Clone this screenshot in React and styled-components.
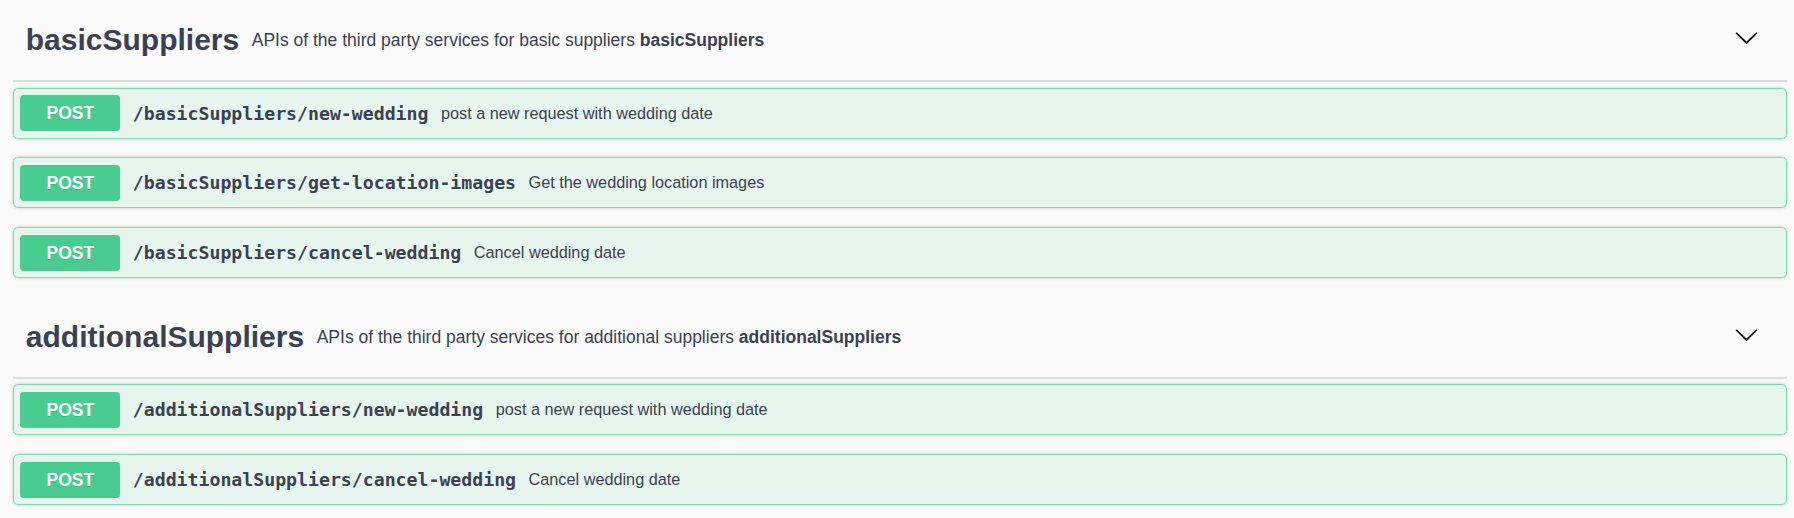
import React from "react";
import styled, { createGlobalStyle } from "styled-components";

const Global = createGlobalStyle`
  html, body { margin: 0; padding: 0; background: #fafafa; }
  body { font-family: "Liberation Sans", Arial, sans-serif; }
  * { box-sizing: border-box; }
`;

const Wrapper = styled.div`
  padding: 0 7px 0 13.3px;
`;

const Section = styled.section`
  display: flex;
  flex-direction: column;
`;

const TagHeader = styled.h3`
  display: flex;
  align-items: center;
  margin: 0 0 5.5px;
  padding: 12.5px 25px 12.5px 12.5px;
  border-bottom: 2px solid #dcdcdd;
  font-family: "Liberation Sans", Arial, sans-serif;
  font-size: 30px;
  font-weight: 700;
  color: #3b4151;
  cursor: pointer;
`;

const TagName = styled.span`
  white-space: nowrap;
`;

const TagDescription = styled.small`
  flex: 2;
  padding: 0 12.5px;
  font-size: 17.5px;
  font-weight: 400;
  color: #3b4151;
  font-family: "Liberation Sans", Arial, sans-serif;

  p {
    margin: 17.5px 0;
    line-height: 20px;
  }
`;

const ExpandButton = styled.button`
  background: none;
  border: none;
  padding: 0 3.5px;
  margin-top: -5px;
  display: flex;
  align-items: center;
  cursor: pointer;
  color: #111;
`;

const OpBlock = styled.div`
  margin: 0 0 18.75px;
  border: 1px solid #80d7ae;
  border-radius: 5px;
  background: rgba(73, 204, 144, 0.1);
  box-shadow: 0 0 3.75px rgba(0, 0, 0, 0.19);
`;

const Summary = styled.div`
  display: flex;
  align-items: center;
  padding: 6.5px 6px;
  cursor: pointer;
`;

const Method = styled.span`
  min-width: 100px;
  height: 36px;
  line-height: 36px;
  border-radius: 3.75px;
  background: #49cc90;
  color: #fff;
  text-align: center;
  font-family: "Liberation Sans", Arial, sans-serif;
  font-size: 17.5px;
  font-weight: 700;
  text-shadow: 0 1.25px 0 rgba(0, 0, 0, 0.1);
`;

const Path = styled.span`
  display: flex;
  align-items: center;
  padding: 0 12.5px;
  font-family: "DejaVu Sans Mono", "Liberation Mono", monospace;
  font-size: 18.2px;
  font-weight: 700;
  color: #3b4151;
  white-space: nowrap;
`;

const OpDescription = styled.div`
  flex: 1 1 auto;
  font-family: "Liberation Sans", Arial, sans-serif;
  font-size: 16.25px;
  color: #3b4151;
`;

const Arrow = () => (
  <svg width="25" height="25" viewBox="0 0 20 20" fill="currentColor" aria-hidden="true">
    <path d="M17.418 6.109c.272-.268.709-.268.979 0s.271.701 0 .969l-7.908 7.83c-.27.268-.707.268-.979 0l-7.908-7.83c-.27-.268-.27-.701 0-.969.271-.268.709-.268.979 0L10 13.25l7.418-7.141z" />
  </svg>
);

const sections = [
  {
    name: "basicSuppliers",
    desc: "APIs of the third party services for basic suppliers",
    ops: [
      { path: "/basicSuppliers/new-wedding", summary: "post a new request with wedding date" },
      { path: "/basicSuppliers/get-location-images", summary: "Get the wedding location images" },
      { path: "/basicSuppliers/cancel-wedding", summary: "Cancel wedding date" },
    ],
  },
  {
    name: "additionalSuppliers",
    desc: "APIs of the third party services for additional suppliers",
    ops: [
      { path: "/additionalSuppliers/new-wedding", summary: "post a new request with wedding date" },
      { path: "/additionalSuppliers/cancel-wedding", summary: "Cancel wedding date" },
    ],
  },
];

export default function App() {
  return (
    <>
      <Global />
      <Wrapper>
        {sections.map((s) => (
          <Section key={s.name}>
            <TagHeader>
              <TagName>{s.name}</TagName>
              <TagDescription>
                <p>
                  {s.desc} <strong>{s.name}</strong>
                </p>
              </TagDescription>
              <ExpandButton title="Collapse operation">
                <Arrow />
              </ExpandButton>
            </TagHeader>
            {s.ops.map((op) => (
              <OpBlock key={op.path}>
                <Summary>
                  <Method>POST</Method>
                  <Path>{op.path}</Path>
                  <OpDescription>{op.summary}</OpDescription>
                </Summary>
              </OpBlock>
            ))}
          </Section>
        ))}
      </Wrapper>
    </>
  );
}
